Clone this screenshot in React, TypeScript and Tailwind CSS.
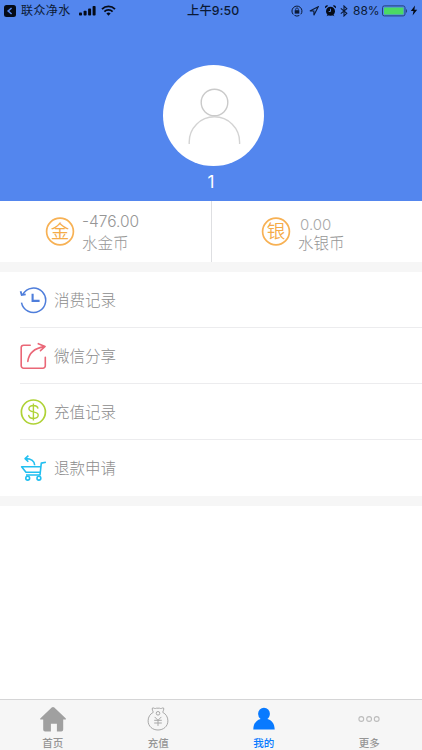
import React from 'react';

interface MenuItem {
    title: string;
    icon: React.ReactNode;
}

function StatusBar() {
    return (
        <div className="grid grid-cols-[187px_52px_1fr] h-[22px] items-center text-[#0b1a36]">
            <div className="flex items-center pl-1">
                <svg width="12" height="12" viewBox="0 0 12 12">
                    <rect width="12" height="12" rx="2.5" fill="#050b18" />
                    <path d="M7.6 3L4.2 6l3.4 3" fill="none" stroke="#5386ee" strokeWidth="1.6" />
                </svg>
                <span className="ml-[5px] w-[58px] text-[12px] leading-[22px] whitespace-nowrap tracking-[0.4px]">联众净水</span>
                <svg className="-mt-px" width="17" height="10" viewBox="0 0 17 10" fill="#050b18">
                    <rect x="0" y="6.5" width="3" height="3" rx="0.8" />
                    <rect x="4.6" y="4.8" width="3" height="4.7" rx="0.8" />
                    <rect x="9.1" y="2.6" width="3" height="6.9" rx="0.8" />
                    <rect x="13.6" y="0" width="3" height="9.5" rx="0.8" />
                </svg>
                <svg className="ml-[5px] -mt-[2px]" width="15" height="11" viewBox="0 0 15 11" fill="none" stroke="#050b18" strokeWidth="1.8">
                    <path d="M1 4.1a9.3 9.3 0 0 1 13 0" />
                    <path d="M3.4 6.6a5.8 5.8 0 0 1 8.2 0" />
                    <path d="M7.5 10.7L5.4 8.5a3 3 0 0 1 4.2 0z" fill="#050b18" stroke="none" />
                </svg>
            </div>
            <div className="text-[12.3px] font-medium leading-[22px] text-center whitespace-nowrap tracking-[0.1px]">
                上午<span className="font-[Inter]">9:50</span>
            </div>
            <div className="flex items-center justify-end pr-[4px] -mt-px">
                {/* Блокировка поворота */}
                <svg className="-ml-px" width="12" height="12" viewBox="0 0 12 12" fill="none" stroke="#0b1a36">
                    <path d="M2.3 9.5A5 5 0 1 1 9.8 9.3M3.5 10.4a5 5 0 0 0 4.8.1" />
                    <rect x="3.7" y="5.2" width="4.6" height="3.4" fill="#0b1a36" stroke="none" />
                    <path d="M4.7 5.3V4.2a1.3 1.3 0 0 1 2.6 0v1.1" strokeWidth="0.8" />
                </svg>
                <svg className="ml-[6px]" width="10" height="10" viewBox="0 0 10 10" fill="none" stroke="#0b1a36" strokeWidth="1.1">
                    <path d="M9.2.8L.9 5h4v4.2z" />
                </svg>
                <svg className="ml-[6px]" width="11" height="12" viewBox="0 0 11 12" fill="#050b18">
                    <circle cx="5.5" cy="6.3" r="4.5" />
                    <path d="M.3 3.3A2 2 0 0 1 3.2.7zM10.7 3.3A2 2 0 0 0 7.8.7zM1.5 11.3l1.3-1.8 1 .8zM9.5 11.3L8.2 9.5l-1 .8z" />
                    <path d="M5.5 3.7v2.8H3.7" stroke="#5386ee" strokeWidth=".9" fill="none" />
                </svg>
                <svg className="ml-[4px] mr-px" width="8" height="12" viewBox="0 0 8 12" fill="none" stroke="#0b1a36" strokeWidth="1.1">
                    <path d="M.8 3.3l6 5L4 11V1l2.8 2.7-6 5" />
                </svg>
                <span className="ml-[4px] w-[27px] font-[Inter] text-[12px] leading-[22px]">88%</span>
                <svg className="ml-[2px]" width="26" height="12" viewBox="0 0 26 12">
                    <rect x=".5" y=".9" width="22.5" height="10" rx="1.8" fill="none" stroke="#244178" />
                    <rect x="2" y="2.4" width="19.5" height="7" rx=".6" fill="#4bd964" />
                    <path d="M24 4c1.4.6 1.4 3.2 0 3.9z" fill="#244178" />
                </svg>
                <svg className="ml-[2px]" width="8" height="11" viewBox="0 0 8 11" fill="#050b18">
                    <path d="M5 .5L.8 6h2.7L2.6 10.5 7.2 4.7H4.4z" />
                </svg>
            </div>
        </div>
    );
}

function CoinIcon({ char }: { char: string }) {
    return (
        <svg className="shrink-0" width="30" height="30" viewBox="0 0 30 30">
            <circle cx="15" cy="15.5" r="13.4" fill="none" stroke="#f7b154" strokeWidth="1.7" />
            <text x="15" y="22" textAnchor="middle" fontSize="18.5" fontWeight="350" fill="#f5ab48">{char}</text>
        </svg>
    );
}

const menu: MenuItem[] = [
    {
        title: '消费记录',
        icon: (
            <svg width="28" height="28" viewBox="-0.4 0 28 28" fill="none" stroke="#4f7edb" strokeWidth="1.5">
                <path d="M2.1 16.6A12.2 12.2 0 1 0 3.5 8.2" />
                <path d="M1.2 5.2l1.100 3.800 4-.7" strokeWidth="1.8" />
                <path d="M13.2 7.7v7.2h7" strokeWidth="2.1" />
            </svg>
        ),
    },
    {
        title: '微信分享',
        icon: (
            <svg width="28" height="28" viewBox="-0.4 0 28 28" fill="none" stroke="#ea6777" strokeWidth="1.6" strokeLinecap="round" strokeLinejoin="round">
                <path d="M10.8 3.2H4.2a2.4 2.4 0 0 0-2.400 2.4v18.2a2.4 2.4 0 0 0 2.400 2.4h19.3a2.4 2.4 0 0 0 2.400-2.4v-8.6" />
                <path d="M8.4 19.4C9.3 11.5 14.3 6.3 25 4.6M18.9 1.7L25.7 4.5l-4.600 4.200" />
            </svg>
        ),
    },
    {
        title: '充值记录',
        icon: (
            <svg width="28" height="28" viewBox="-0.4 0 28 28" fill="none" stroke="#afd236" strokeWidth="1.7">
                <circle cx="14" cy="14" r="12" />
                <path d="M18.600 10.600c-.3-2-2.100-3.100-4.600-3.100s-4.500 1.200-4.500 3.200c0 4.400 9.300 2 9.300 6.400 0 2.100-2 3.400-4.700 3.400-2.800 0-4.700-1.300-4.900-3.600M14 5.500v17" strokeWidth="1.4" />
            </svg>
        ),
    },
    {
        title: '退款申请',
        icon: (
            <svg width="28" height="28" viewBox="-0.4 0 28 28" fill="none" stroke="#22bff0" strokeWidth="1.6" strokeLinejoin="round">
                <path d="M26.5 8.2l-4.6.9-1.3 11.9H6.6M21.400 12.800H2.2l4.4 5.400h14.3" />
                <circle cx="8.3" cy="24.200" r="1.9" />
                <circle cx="19.500" cy="24.200" r="1.9" />
                <path d="M15.300 11.300c-.1-4-3.500-6.700-9-6.700M9 1.700L5.700 4.600l3.200 3.100" />
            </svg>
        ),
    },
];

function TabBar() {
    return (
        <div className="grid grid-cols-4 h-[51px] bg-[#f6f6f6] border-t border-[#d5d5d6] text-[10.5px] leading-[14px] font-medium text-[#959595]">
            <div className="flex flex-col items-center pt-[6px]">
                <svg width="28" height="28" viewBox="0 0 28 28" fill="#a0a0a0">
                    <path d="M12.7 1.6a2 2 0 0 1 2.6 0L26.6 12.2c.7.7.4 1.4-.5 1.4h-1.9V23.5a1.9 1.9 0 0 1-1.9 1.9h-4.4v-7.7h-6v7.7H6.1a1.9 1.9 0 0 1-1.9-1.9V13.6H2c-.9 0-1.3-.7-.5-1.4z" />
                </svg>
                <span className="mt-[2px]">首页</span>
            </div>
            <div className="flex flex-col items-center pt-[6px]">
                <svg width="28" height="28" viewBox="0 0 28 28" fill="none" stroke="#a8a8a8" strokeWidth="1">
                    <path d="M9.300 6.300C8.800 5 7.900 3.400 8.400 2c1.200-.5 2.100.8 3 .5.900-.5 1.600-.3 2.600-.3s1.700-.2 2.600.3c.9.300 1.800-1 3-.5.500 1.400-.4 3-.9 4.300 3.200 1.600 5.200 4.800 5.200 8.500 0 5.500-4.400 9.200-9.900 9.200s-9.900-3.700-9.900-9.200c0-3.700 2-6.900 5.200-8.500z" />
                    <circle cx="14" cy="7.3" r="1.8" />
                    <path d="M10.6 10.9l3.4 3.4 3.4-3.4M10.2 14.3h7.6M10.2 17h7.6M14 14.3v5.6" />
                </svg>
                <span className="mt-[2px]">充值</span>
            </div>
            <div className="flex flex-col items-center pt-[6px] text-[#087aff]">
                <svg width="28" height="28" viewBox="0 0 28 28" fill="#087aff">
                    <path d="M14 1.8a5.9 5.9 0 0 1 5.9 6c0 2.2-1 4.1-2.5 5.100 4.300 1.200 7.200 4.500 7.300 10.500H3.300c.1-6 3-9.300 7.300-10.500a6.200 6.200 0 0 1-2.500-5.100 5.900 5.900 0 0 1 5.900-6z" />
                </svg>
                <span className="mt-[2px]">我的</span>
            </div>
            <div className="flex flex-col items-center pt-[6px]">
                <svg width="28" height="28" viewBox="0 0 28 28" fill="none" stroke="#bcbcbc" strokeWidth="1.1">
                    <circle cx="6.3" cy="13" r="2.4" />
                    <circle cx="14.1" cy="13" r="2.4" />
                    <circle cx="21.7" cy="13" r="2.4" />
                </svg>
                <span className="mt-[2px]">更多</span>
            </div>
        </div>
    );
}

function App() {
    return (
        <div className="flex flex-col w-[422px] h-[750px] overflow-hidden bg-white font-['Liberation_Sans','Noto_Sans_CJK_SC',sans-serif]">
            {/* Шапка с аватаром */}
            <div className="h-[201px] shrink-0 bg-[#5386ee]">
                <StatusBar />
                <div className="flex flex-col items-center pt-[43px]">
                    <div className="w-[101px] h-[101px] ml-[5px] rounded-full bg-white">
                        <svg width="101" height="101" viewBox="0 0 101 101" fill="none" stroke="#d3d3d3" strokeWidth="1.4">
                            <circle cx="51.5" cy="37.5" r="13.3" stroke="#cacaca" />
                            <path d="M26.2 79v-2a25.2 25.2 0 0 1 50.4 0v2" />
                        </svg>
                    </div>
                    <p className="mt-[5px] font-[Inter] text-[17px] leading-[22px] text-white">1</p>
                </div>
            </div>

            {/* Баланс */}
            <div className="grid grid-cols-[212px_210px] h-[61px] shrink-0 text-[15.5px] text-[#969696]">
                <div className="flex pl-[45px] pt-[15px] border-r border-[#dedfe2]">
                    <CoinIcon char="金" />
                    <div className="ml-[7px] -mt-[5px]">
                        <p className="font-[Inter] font-light leading-[21px]">-476.00</p>
                        <p className="mt-px font-light leading-[22px]">水金币</p>
                    </div>
                </div>
                <div className="flex pl-[49px] pt-[15px]">
                    <CoinIcon char="银" />
                    <div className="ml-[7px] -mt-[2px]">
                        <p className="pl-[2px] font-[Inter] font-light text-[15px] leading-[21px] text-[#a8a8a8]">0.00</p>
                        <p className="-mt-[2px] font-light leading-[22px]">水银币</p>
                    </div>
                </div>
            </div>
            <div className="h-[10px] shrink-0 bg-[#f6f6f6]" />

            {/* Меню */}
            <div className="shrink-0">
                {menu.map((item, index) => (
                    <div key={item.title} className="pl-[20px]">
                        <div className={`flex items-center h-[56px] border-b ${index < menu.length - 1 ? 'border-[#ececee]' : 'border-transparent'}`}>
                            <div className="w-[34px] -ml-px">{item.icon}</div>
                            <span className="ml-px pt-[3px] font-light text-[15.5px] leading-[24px] text-[#8c8c8c]">{item.title}</span>
                        </div>
                    </div>
                ))}
            </div>
            <div className="h-[10px] shrink-0 bg-[#f6f6f6]" />

            <div className="flex-1" />
            <TabBar />
        </div>
    );
}

export default App;
